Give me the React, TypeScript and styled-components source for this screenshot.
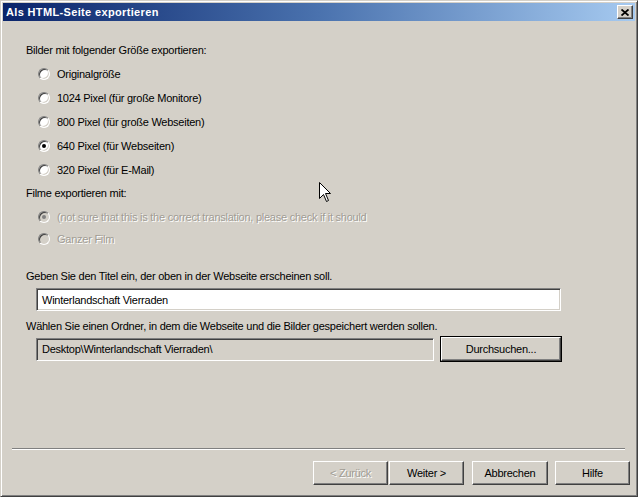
import React from 'react';
import styled, { createGlobalStyle, css } from 'styled-components';

const GlobalStyle = createGlobalStyle`
   html, body {
      margin: 0;
      padding: 0;
      background: #d4d0c8;
   }
   * {
      box-sizing: border-box;
   }
`;

const Window = styled.div`
   position: relative;
   width: 638px;
   height: 497px;
   display: flex;
   flex-direction: column;
   background: #d4d0c8;
   border: 1px solid;
   border-color: #d4d0c8 #404040 #404040 #d4d0c8;
   box-shadow: inset 1px 1px #ffffff, inset -1px -1px #808080;
   padding: 2px;
   font-family: 'Liberation Sans', Arial, sans-serif;
   font-size: 11px;
   color: #000000;
`;

const TitleBar = styled.div`
   height: 18px;
   display: flex;
   align-items: center;
   justify-content: space-between;
   padding: 0 2px 0 3px;
   background: linear-gradient(to right, #0a246a 0%, #4a72ae 50%, #a6caf0 100%);
`;

const Title = styled.span`
   color: #ffffff;
   font-weight: bold;
   font-size: 11px;
   letter-spacing: 0.35px;
`;

const CloseButton = styled.div`
   width: 16px;
   height: 14px;
   display: flex;
   align-items: center;
   justify-content: center;
   background: #d4d0c8;
   border: 1px solid;
   border-color: #ffffff #404040 #404040 #ffffff;
   box-shadow: inset -1px -1px #808080;
`;

const Content = styled.div`
   flex: 1;
   display: flex;
   flex-direction: column;
   padding: 0 0 0 23px;
`;

const Label = styled.div<{ $top: number }>`
   line-height: 13px;
   height: 13px;
   margin-top: ${(p) => p.$top}px;
   white-space: nowrap;
   letter-spacing: -0.25px;
`;

const Group = styled.div<{ $top: number }>`
   display: flex;
   flex-direction: column;
   margin-top: ${(p) => p.$top}px;
   padding-left: 12px;
`;

const RadioRow = styled.div<{ $height: number; $disabled?: boolean }>`
   height: ${(p) => p.$height}px;
   display: flex;
   align-items: center;
   gap: 7px;
   white-space: nowrap;
   letter-spacing: -0.25px;
   ${(p) =>
      p.$disabled &&
      css`
         color: #a09c94;
         text-shadow: 1px 1px #ffffff;
      `}
`;

const RadioCircle = styled.span<{ $disabled?: boolean }>`
   position: relative;
   width: 12px;
   height: 12px;
   flex: 0 0 12px;
   border-radius: 50%;
   border: 1px solid;
   border-color: #808080 #ffffff #ffffff #808080;
   background: ${(p) => (p.$disabled ? '#d4d0c8' : '#ffffff')};
   box-shadow: inset 1px 1px #404040, inset -1px -1px #d4d0c8;
`;

const RadioDot = styled.span<{ $disabled?: boolean }>`
   position: absolute;
   left: 3px;
   top: 3px;
   width: 4px;
   height: 4px;
   border-radius: 50%;
   background: ${(p) => (p.$disabled ? '#808080' : '#000000')};
`;

const TextField = styled.div<{ $readOnly?: boolean; $width: number }>`
   width: ${(p) => p.$width}px;
   height: 23px;
   display: flex;
   align-items: center;
   padding-left: 5px;
   white-space: nowrap;
   letter-spacing: -0.25px;
   background: ${(p) => (p.$readOnly ? '#d4d0c8' : '#ffffff')};
   border: 1px solid;
   border-color: #808080 #ffffff #ffffff #808080;
   box-shadow: inset 1px 1px #404040, inset -1px -1px #d4d0c8;
`;

const FieldWrap = styled.div<{ $top: number }>`
   margin-top: ${(p) => p.$top}px;
   margin-left: 10px;
   display: flex;
   align-items: center;
   gap: 7px;
`;

const Button = styled.div<{ $width: number; $height: number; $default?: boolean; $disabled?: boolean }>`
   width: ${(p) => p.$width}px;
   height: ${(p) => p.$height}px;
   display: flex;
   align-items: center;
   justify-content: center;
   letter-spacing: -0.25px;
   background: #d4d0c8;
   border: 1px solid;
   border-color: #ffffff #404040 #404040 #ffffff;
   box-shadow: inset -1px -1px #808080, inset 1px 1px #d4d0c8;
   ${(p) =>
      p.$default &&
      css`
         outline: 1px solid #000000;
      `}
   ${(p) =>
      p.$disabled &&
      css`
         color: #a09c94;
         text-shadow: 1px 1px #ffffff;
      `}
`;

const Separator = styled.div`
   height: 2px;
   margin: 0 10px 0 9px;
   border-top: 1px solid #808080;
   border-bottom: 1px solid #ffffff;
`;

const Footer = styled.div`
   display: flex;
   justify-content: flex-end;
   align-items: center;
   padding: 11px 5px 9px 0;
`;

const ButtonGap = styled.span<{ $width: number }>`
   width: ${(p) => p.$width}px;
`;

const Cursor = styled.svg`
   position: absolute;
   left: 318px;
   top: 181px;
`;

const Radio: React.FC<{ label: string; checked?: boolean; disabled?: boolean; height: number }> = ({
   label,
   checked,
   disabled,
   height,
}) => (
   <RadioRow $height={height} $disabled={disabled}>
      <RadioCircle $disabled={disabled}>{checked && <RadioDot $disabled={disabled} />}</RadioCircle>
      <span>{label}</span>
   </RadioRow>
);

const sizes = [
   'Originalgröße',
   '1024 Pixel (für große Monitore)',
   '800 Pixel (für große Webseiten)',
   '640 Pixel (für Webseiten)',
   '320 Pixel (für E-Mail)',
];

export default function App() {
   return (
      <>
         <GlobalStyle />
         <Window>
            <TitleBar>
               <Title>Als HTML-Seite exportieren</Title>
               <CloseButton>
                  <svg width="8" height="7" viewBox="0 0 8 7">
                     <path d="M0.5 0.5 L7.5 6.5 M7.5 0.5 L0.5 6.5" stroke="#000" strokeWidth="1.8" />
                  </svg>
               </CloseButton>
            </TitleBar>
            <Content>
               <Label $top={23}>Bilder mit folgender Größe exportieren:</Label>
               <Group $top={5}>
                  {sizes.map((s, i) => (
                     <Radio key={s} label={s} checked={i === 3} height={24} />
                  ))}
               </Group>
               <Label $top={5}>Filme exportieren mit:</Label>
               <Group $top={6}>
                  <Radio
                     label="(not sure that this is the correct translation, please check if it should"
                     checked
                     disabled
                     height={22}
                  />
                  <Radio label="Ganzer Film" disabled height={22} />
               </Group>
               <Label $top={20}>Geben Sie den Titel ein, der oben in der Webseite erscheinen soll.</Label>
               <FieldWrap $top={5}>
                  <TextField $width={525}>Winterlandschaft Vierraden</TextField>
               </FieldWrap>
               <Label $top={9}>Wählen Sie einen Ordner, in dem die Webseite und die Bilder gespeichert werden sollen.</Label>
               <FieldWrap $top={4}>
                  <TextField $readOnly $width={398}>
                     Desktop\Winterlandschaft Vierraden\
                  </TextField>
                  <Button $width={120} $height={24} $default>
                     Durchsuchen...
                  </Button>
               </FieldWrap>
            </Content>
            <Separator />
            <Footer>
               <Button $width={75} $height={24} $disabled>
                  &lt; Zurück
               </Button>
               <ButtonGap $width={1} />
               <Button $width={75} $height={24}>
                  Weiter &gt;
               </Button>
               <ButtonGap $width={8} />
               <Button $width={76} $height={24}>
                  Abbrechen
               </Button>
               <ButtonGap $width={7} />
               <Button $width={75} $height={24}>
                  Hilfe
               </Button>
            </Footer>
            <Cursor width="13" height="21" viewBox="0 0 13 21">
               <path
                  d="M0.5 0.5 L0.5 16.5 L4.5 12.5 L7.5 19.5 L9.5 18.5 L6.5 11.5 L11.5 11.5 Z"
                  fill="#ffffff"
                  stroke="#000000"
                  strokeWidth="1"
               />
            </Cursor>
         </Window>
      </>
   );
}
